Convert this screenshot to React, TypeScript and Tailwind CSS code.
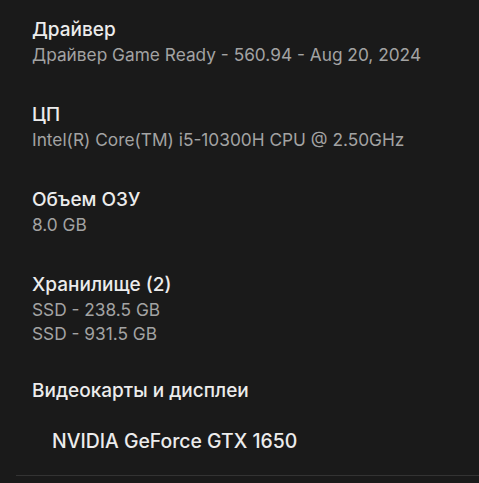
const SECTIONS: { title: string; values: string[] }[] = [
  { title: "Драйвер", values: ["Драйвер Game Ready - 560.94 - Aug 20, 2024"] },
  { title: "ЦП", values: ["Intel(R) Core(TM) i5-10300H CPU @ 2.50GHz"] },
  { title: "Объем ОЗУ", values: ["8.0 GB"] },
  { title: "Хранилище (2)", values: ["SSD - 238.5 GB", "SSD - 931.5 GB"] },
];

export default function App() {
  return (
    <div
      className="h-[483px] w-[479px] overflow-hidden bg-[#1a1a1a] pt-[16px]"
      style={{ fontFamily: "Inter, 'Noto Sans', sans-serif" }}
    >
      <div className="flex flex-col gap-[34px] pl-8">
        {SECTIONS.map((s) => (
          <div key={s.title} className="flex flex-col">
            <div className="text-[19px] leading-[27px] font-medium text-[#ececec]">{s.title}</div>
            {s.values.map((v) => (
              <div key={v} className="text-[17.3px] leading-[24px] text-[#a3a3a3]">
                {v}
              </div>
            ))}
          </div>
        ))}
      </div>
      <div className="mt-[31px] flex flex-col pl-8">
        <div className="text-[19px] leading-[27px] font-medium text-[#ececec]">Видеокарты и дисплеи</div>
        <div className="mt-[24px] pl-5 text-[19.4px] leading-[27px] font-medium text-[#ececec]">
          NVIDIA GeForce GTX 1650
        </div>
      </div>
      <div className="ml-4 mt-[20px] h-px bg-[#333333]" />
    </div>
  );
}
